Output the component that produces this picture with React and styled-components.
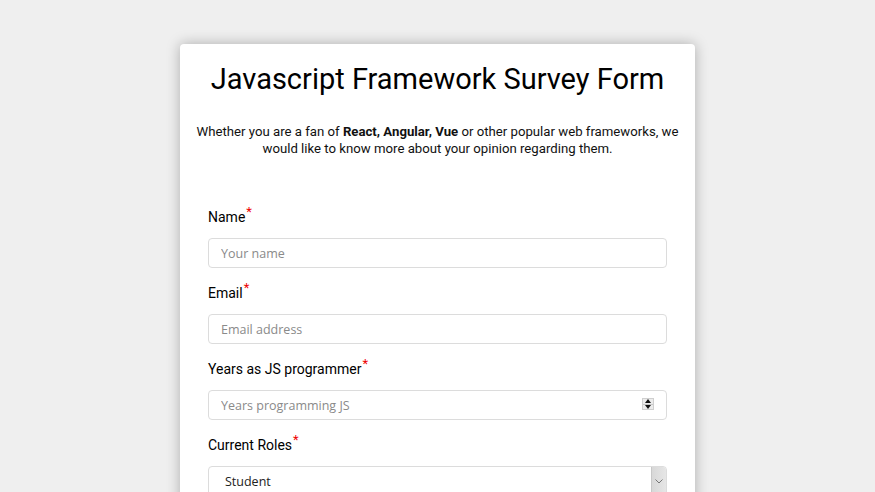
import React from "react";
import styled, { createGlobalStyle } from "styled-components";

const GlobalStyle = createGlobalStyle`
  html, body { margin: 0; padding: 0; }
  body {
    background: #efefef;
    font-family: Roboto, "Liberation Sans", Arial, sans-serif;
    color: #111;
  }
`;

const Page = styled.div`
  display: flex;
  justify-content: center;
  padding: 44px 0 40px;
`;

const Card = styled.main`
  width: 515px;
  box-sizing: border-box;
  background: #fff;
  border-radius: 4px;
  box-shadow: 0 0 14px rgba(0, 0, 0, 0.28);
  padding: 18px 28px 40px;
`;

const Title = styled.h1`
  margin: 0;
  font-size: 29px;
  font-weight: 400;
  line-height: 34px;
  text-align: center;
  color: #000;
`;

const Description = styled.p`
  margin: 27px -16px 0;
  font-size: 13.2px;
  line-height: 17px;
  text-align: center;
  color: #111;
  b { font-weight: 700; }
`;

const Form = styled.form`
  margin-top: 50px;
  display: flex;
  flex-direction: column;
`;

const Field = styled.div`
  display: flex;
  flex-direction: column;
  margin-bottom: 15px;
`;

const Label = styled.label`
  font-size: 14px;
  line-height: 20px;
  margin-bottom: 11px;
  color: #000;
`;

const Req = styled.sup`
  color: #e00;
  font-size: 13px;
  line-height: 0;
  margin-left: 1px;
  vertical-align: 6px;
`;

const InputWrap = styled.div`
  position: relative;
`;

const Input = styled.input`
  width: 100%;
  height: 30px;
  box-sizing: border-box;
  border: 1px solid #dcdcdc;
  border-radius: 4px;
  padding: 0 12px;
  font-family: "Open Sans", "DejaVu Sans", sans-serif;
  font-size: 12.5px;
  color: #222;
  outline: none;
  background: #fff;
  &::placeholder { color: #8a8a8a; }
  -moz-appearance: textfield;
  &::-webkit-inner-spin-button,
  &::-webkit-outer-spin-button { -webkit-appearance: none; margin: 0; }
`;

const Spinner = styled.span`
  position: absolute;
  right: 13px;
  top: 8px;
  width: 12px;
  height: 12px;
  display: flex;
  flex-direction: column;
  border: 1px solid #cfcfcf;
  box-sizing: border-box;
  background: #ececec;
  pointer-events: none;
`;

const SpinHalf = styled.span`
  flex: 1;
  display: flex;
  align-items: center;
  justify-content: center;
  ${(p) => (p.$top ? "border-bottom: 1px solid #c8c8c8;" : "")}
`;

const Select = styled.select`
  width: 100%;
  height: 30px;
  box-sizing: border-box;
  border: 1px solid #dcdcdc;
  border-radius: 4px;
  padding: 0 16px;
  font-family: "Open Sans", "DejaVu Sans", sans-serif;
  font-size: 12.5px;
  color: #222;
  appearance: none;
  -webkit-appearance: none;
  background: #fff;
  outline: none;
`;

const SelectArrow = styled.span`
  position: absolute;
  right: 1px;
  top: 1px;
  width: 14px;
  height: 28px;
  background: linear-gradient(to right, #d8d8d8, #e6e6e6);
  border-left: 1px solid #c8c8c8;
  border-top-right-radius: 3px;
  display: flex;
  align-items: center;
  justify-content: center;
  pointer-events: none;
`;

const Req2 = () => <Req>*</Req>;

export default function App() {
  return (
    <>
      <GlobalStyle />
      <Page>
        <Card>
          <Title id="title">Javascript Framework Survey Form</Title>
          <Description id="description">
            Whether you are a fan of <b>React, Angular, Vue</b> or other popular web frameworks, we
            <br />
            would like to know more about your opinion regarding them.
          </Description>
          <Form id="survey-form" onSubmit={(e) => e.preventDefault()}>
            <Field>
              <Label htmlFor="name">
                Name<Req2 />
              </Label>
              <Input id="name" type="text" placeholder="Your name" />
            </Field>
            <Field>
              <Label htmlFor="email">
                Email<Req2 />
              </Label>
              <Input id="email" type="email" placeholder="Email address" />
            </Field>
            <Field>
              <Label htmlFor="number">
                Years as JS programmer<Req2 />
              </Label>
              <InputWrap>
                <Input id="number" type="number" placeholder="Years programming JS" />
                <Spinner>
                  <SpinHalf $top>
                    <svg width="6" height="4" viewBox="0 0 6 4">
                      <path d="M0 4 L3 0 L6 4 Z" fill="#111" />
                    </svg>
                  </SpinHalf>
                  <SpinHalf>
                    <svg width="6" height="4" viewBox="0 0 6 4">
                      <path d="M0 0 L3 4 L6 0 Z" fill="#111" />
                    </svg>
                  </SpinHalf>
                </Spinner>
              </InputWrap>
            </Field>
            <Field>
              <Label htmlFor="dropdown">
                Current Roles<Req2 />
              </Label>
              <InputWrap>
                <Select id="dropdown" defaultValue="student">
                  <option value="student">Student</option>
                  <option value="junior">Junior Developer</option>
                  <option value="senior">Senior Developer</option>
                </Select>
                <SelectArrow>
                  <svg width="8" height="5" viewBox="0 0 8 5">
                    <path d="M0.5 0.5 L4 4 L7.5 0.5" stroke="#777" fill="none" strokeWidth="1" />
                  </svg>
                </SelectArrow>
              </InputWrap>
            </Field>
          </Form>
        </Card>
      </Page>
    </>
  );
}
